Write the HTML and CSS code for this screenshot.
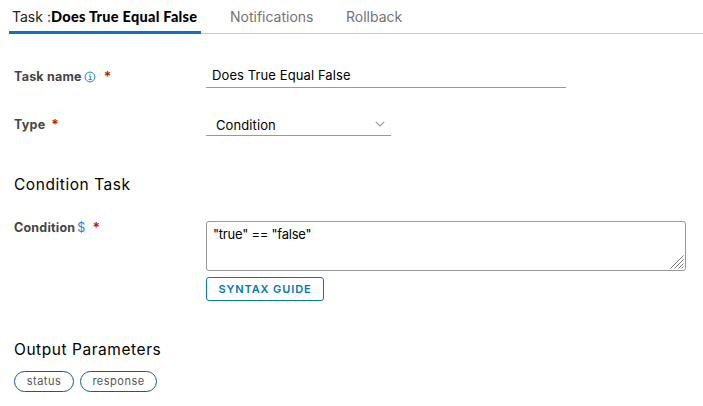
FILE: index.html
```html
<!DOCTYPE html>
<html lang="en">
<head>
<meta charset="utf-8">
<title>Task</title>
<link rel="stylesheet" href="styles.css">
</head>
<body>
<nav class="tabs">
  <a class="tab tab-active"><span class="task-prefix">Task :</span><b>Does True Equal False</b></a>
  <a class="tab tab-notifications">Notifications</a>
  <a class="tab tab-rollback">Rollback</a>
</nav>
<main class="form">
  <div class="row row-name">
    <label class="label"><span class="name-text">Task name</span>
      <svg class="info" viewBox="0 0 12 12"><circle cx="6" cy="6" r="4.9"/><path d="M5 5h1.3v3.6M4.6 8.6h3.2M5.6 3.2h1"/></svg>
      <span class="required">*</span>
    </label>
    <div class="input"><span>Does True Equal False</span></div>
  </div>
  <div class="row row-type">
    <label class="label"><span class="type-text">Type</span><span class="required">*</span></label>
    <div class="select"><span>Condition</span>
      <svg class="chevron" viewBox="0 0 10 6"><path d="M.8.8 5 5 9.2.8"/></svg>
    </div>
  </div>
  <h2 class="heading heading-condition"><span>Condition Task</span></h2>
  <div class="row row-condition">
    <label class="label"><span class="condition-text">Condition</span><span class="dollar">$</span><span class="required">*</span></label>
    <div class="editor">
      <div class="textarea"><span class="code">"true" == "false"</span>
        <svg class="grip" viewBox="0 0 14 14"><path d="M.5 13.5l13-13M4.5 13.5l9-9M8.5 13.5l5-5M11.5 13.5l2-2"/></svg>
      </div>
      <button class="guide"><span>SYNTAX GUIDE</span></button>
    </div>
  </div>
  <h2 class="heading heading-output"><span>Output Parameters</span></h2>
  <div class="chips"><span class="chip chip-status">status</span><span class="chip chip-response">response</span></div>
</main>
</body>
</html>
```
FILE: styles.css
```css
* { box-sizing: border-box; }
body { margin: 0; background: #fff; color: #000; font: 13px/20px Inter, sans-serif; white-space: nowrap; overflow: hidden; }
.tabs { display: flex; height: 34px; margin-left: 9px; border-bottom: 1px solid #ccc; font-size: 14px; }
.tab { padding-top: 7px; color: #737373; }
.tab-active { display: flex; width: 192px; height: 34px; padding-left: 3px; border-bottom: 3px solid #0f72ba; color: #222; }
.tab-active b { font-family: Lato, sans-serif; font-size: 14.5px; font-weight: 900; letter-spacing: .28px; color: #000; }
.task-prefix { width: 39px; }
.tab-notifications { width: 116px; margin-left: 29px; }
.form { padding-left: 14px; }
.row { display: grid; grid-template-columns: 192px auto; }
.row-name { height: 49px; padding-top: 30px; }
.label { display: flex; height: 24px; padding-top: 3px; color: #454545; font-size: 12.5px; font-weight: 700; letter-spacing: .22px; }
.info { width: 12px; height: 12px; margin: 4px 0 0 2px; fill: none; stroke: #2385c6; stroke-width: 1; }
.required { margin: -1px 0 0 8px; color: #c92100; font-size: 13.5px; letter-spacing: 0; }
.row-type .required { margin-left: 6px; }
.input { width: 360px; height: 24px; padding: 1px 6px; border-bottom: 1px solid #999; letter-spacing: .1px; }
.row-type { height: 53px; padding-top: 29px; }
.select { display: flex; width: 185px; height: 24px; padding: 3px 6px 0 10px; border-bottom: 1px solid #999; justify-content: space-between; letter-spacing: .1px; }
.chevron { width: 10px; height: 6px; margin-top: 6px; fill: none; stroke: #999; stroke-width: 1.1; }
.heading { margin: 0; font-size: 15.5px; font-weight: 400; line-height: 22px; letter-spacing: .55px; }
.heading-condition { margin-top: 38px; }
.row-condition { margin-top: 25px; }
.row-condition .label { margin-top: -3px; padding-top: 0; }
.dollar { margin-left: 2px; color: #2385c6; font-weight: 400; }
.row-condition .required { margin-left: 7px; }
.textarea { display: flex; justify-content: space-between; width: 480px; height: 50px; padding: 2px 1px 1px 6px; border: 1px solid #999; border-radius: 3px; }
.code { letter-spacing: -.23px; }
.grip { align-self: flex-end; width: 14px; height: 14px; fill: none; stroke: #777; stroke-width: 1; }
.guide { display: block; width: 118px; height: 24px; margin-top: 6px; padding: 0; border: 1px solid #0079b8; border-radius: 3px; background: #fff; color: #0079b8; font: 600 11px/22px Inter, sans-serif; letter-spacing: .9px; }
.heading-output { margin-top: 38px; }
.chips { display: flex; gap: 6px; margin-top: 10px; }
.chip { height: 21px; border: 1px solid #13589c; border-radius: 11px; color: #565656; font-size: 11px; line-height: 18px; text-align: center; letter-spacing: .5px; }
.chip-status { width: 60px; }
.chip-response { width: 77px; }
```
